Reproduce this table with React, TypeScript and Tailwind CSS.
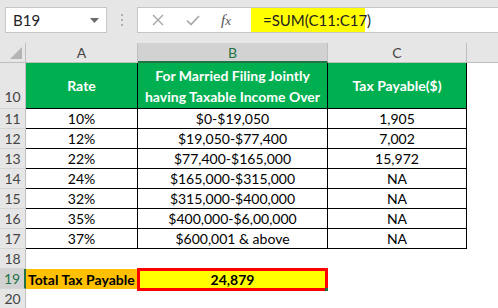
import React from "react";

const font = { fontFamily: "Lato, 'Open Sans', sans-serif" };

const rows: [string, string, string, string][] = [
  ["11", "10%", "$0-$19,050", "1,905"],
  ["12", "12%", "$19,050-$77,400", "7,002"],
  ["13", "22%", "$77,400-$165,000", "15,972"],
  ["14", "24%", "$165,000-$315,000", "NA"],
  ["15", "32%", "$315,000-$400,000", "NA"],
  ["16", "35%", "$400,000-$6,00,000", "NA"],
  ["17", "37%", "$600,001 & above", "NA"],
];

function RowHead({ n, h = "h-[20px]", selected = false, bottom = false }: { n: string; h?: string; selected?: boolean; bottom?: boolean }) {
  return (
    <div
      className={`${h} w-[26px] shrink-0 flex justify-center ${bottom ? "items-end pb-[1px]" : "items-center"} border-b border-[#d4d4d4] ${
        selected ? "bg-[#d2d2d2] text-[#217346] border-r-2 border-r-[#217346]" : "bg-[#e6e6e6] text-[#444] border-r border-r-[#bfbfbf]"
      } text-[14px]`}
    >
      {n}
    </div>
  );
}

export default function App() {
  return (
    <div className="w-[498px] h-[308px] overflow-hidden bg-white text-black" style={font}>
      {/* toolbar */}
      <div className="h-[43px] bg-[#e6e6e6] flex items-start pt-[7px]">
        <div className="ml-[5px] w-[102px] h-[26px] bg-white border border-[#c6c6c6] flex items-center pl-[7px] pr-[6px] text-[15px] text-[#222]">
          <span className="flex-1">B19</span>
          <svg width="9" height="5" viewBox="0 0 9 5" className="mr-[1px]">
            <path d="M0 0 L9 0 L4.5 5 Z" fill="#6a6a6a" />
          </svg>
        </div>
        <div className="w-[30px] h-[26px] flex flex-col items-center justify-center gap-[3px]">
          <div className="w-[2px] h-[2px] bg-[#b0b0b0]" />
          <div className="w-[2px] h-[2px] bg-[#b0b0b0]" />
          <div className="w-[2px] h-[2px] bg-[#b0b0b0]" />
        </div>
        <div className="flex-1 h-[26px] bg-white border border-[#c6c6c6] border-r-0 flex items-center">
          <div className="w-[113px] h-full flex items-center">
            <svg width="12" height="12" viewBox="0 0 12 12" className="ml-[14px]">
              <path d="M1 1 L11 11 M11 1 L1 11" stroke="#a6a6a6" strokeWidth="1.4" />
            </svg>
            <svg width="14" height="11" viewBox="0 0 14 11" className="ml-[22px]">
              <path d="M1 5.5 L5 9.5 L13 1" stroke="#a6a6a6" strokeWidth="1.6" fill="none" />
            </svg>
            <span className="ml-[21px] text-[15px] italic text-[#555]" style={{ fontFamily: "'Liberation Serif', serif" }}>
              f<span className="text-[13px]">x</span>
            </span>
          </div>
          <div className="h-[24px] w-[114px] bg-[#ffff00] flex items-center pl-[12px] text-[15px] text-[#222] whitespace-nowrap">
            =SUM(C11:C17)
          </div>
        </div>
      </div>

      {/* column headers */}
      <div className="flex h-[20px] text-[14px] text-[#444]">
        <div className="w-[26px] shrink-0 bg-[#e6e6e6] border-r border-b border-[#bfbfbf] relative">
          <svg width="12" height="12" viewBox="0 0 12 12" className="absolute right-[3px] bottom-[3px]">
            <path d="M12 0 L12 12 L0 12 Z" fill="#b4b4b4" />
          </svg>
        </div>
        <div className="w-[112px] shrink-0 bg-[#e6e6e6] border-r border-b border-[#bfbfbf] flex items-center justify-center">A</div>
        <div className="w-[190px] shrink-0 bg-[#d2d2d2] border-r border-[#bfbfbf] border-b-2 border-b-[#217346] flex items-center justify-center text-[#217346]">B</div>
        <div className="w-[139px] shrink-0 bg-[#e6e6e6] border-r border-b border-[#bfbfbf] flex items-center justify-center">C</div>
        <div className="flex-1 bg-[#e6e6e6] border-b border-[#bfbfbf]" />
      </div>

      {/* header row 10 */}
      <div className="flex">
        <RowHead n="10" h="h-[46px]" bottom />
        <div className="w-[112px] h-[46px] shrink-0 bg-[#00b050] border-r border-b border-black flex items-center justify-center text-white font-bold text-[14px]">
          Rate
        </div>
        <div className="w-[190px] h-[46px] shrink-0 bg-[#00b050] border-r border-b border-black flex items-center justify-center text-center text-white font-bold text-[14px] leading-[21px]">
          For Married Filing Jointly
          <br />
          having Taxable Income Over
        </div>
        <div className="w-[139px] h-[46px] shrink-0 bg-[#00b050] border-r border-b border-black flex items-center justify-center text-white font-bold text-[14px]">
          Tax Payable($)
        </div>
      </div>

      {rows.map(([n, a, b, c]) => (
        <div key={n} className="flex text-[14px]">
          <RowHead n={n} />
          <div className="w-[112px] h-[20px] shrink-0 border-r border-b border-black flex items-center justify-center">{a}</div>
          <div className="w-[190px] h-[20px] shrink-0 border-r border-b border-black flex items-center justify-center">{b}</div>
          <div className="w-[139px] h-[20px] shrink-0 border-r border-b border-black flex items-center justify-center">{c}</div>
        </div>
      ))}

      <div className="flex">
        <RowHead n="18" />
      </div>

      <div className="flex text-[14px]">
        <RowHead n="19" selected />
        <div className="w-[111px] h-[20px] shrink-0 bg-[#ffc000] flex items-center pl-[2px] font-bold whitespace-nowrap">Total Tax Payable</div>
        <div className="relative w-[191px] h-[23px] -mt-px shrink-0 bg-[#ffff00] border-[3px] border-[#ff0000] flex items-center justify-center font-bold">
          24,879
          <div className="absolute -right-[3px] -bottom-[3px] w-[3px] h-[3px] bg-[#217346]" />
        </div>
      </div>

      <div className="flex -mt-[2px]">
        <RowHead n="20" />
      </div>
    </div>
  );
}
